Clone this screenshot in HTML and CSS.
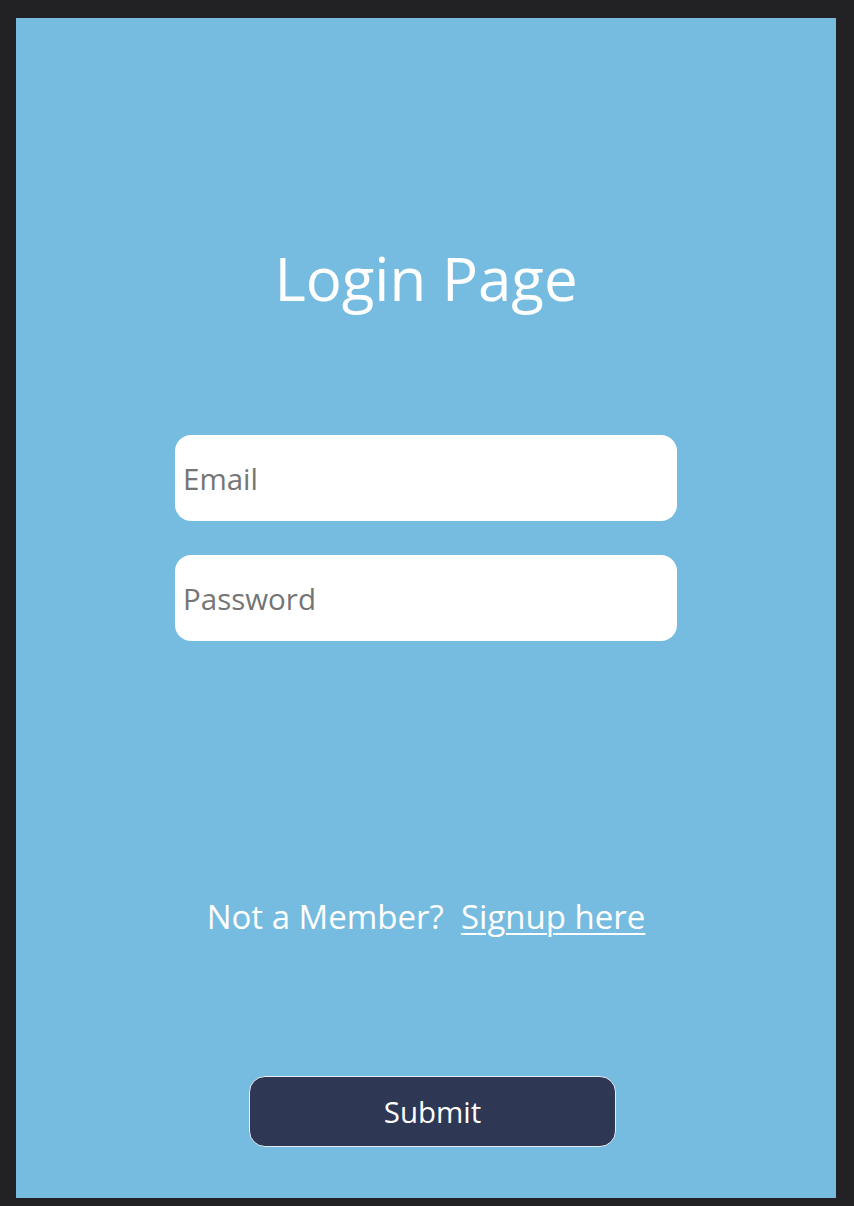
FILE: index.html
```html
<!DOCTYPE html>
<html lang="en">
<head>
<meta charset="utf-8">
<title>Login Page</title>
<link rel="stylesheet" href="styles.css">
</head>
<body>
<div class="frame">
  <main class="panel">
    <h1 class="title">Login Page</h1>
    <form class="form">
      <input class="field" type="email" placeholder="Email">
      <input class="field" type="password" placeholder="Password">
    </form>
    <p class="signup">Not a Member?&nbsp; <a href="#" class="signup-link">Signup here</a></p>
    <button class="submit" type="button">Submit</button>
  </main>
</div>
</body>
</html>
```

FILE: styles.css
```css
* { box-sizing: border-box; }

html, body {
  margin: 0;
  background: #222224;
}

.frame {
  padding: 18px 18px 8px 16px;
  height: 1206px;
}

.panel {
  background: #76bce0;
  height: 1180px;
  display: flex;
  flex-direction: column;
  align-items: center;
  font-family: "Open Sans", "Noto Sans", sans-serif;
  color: #ffffff;
  padding-top: 225px;
}

.title {
  margin: 0;
  font-weight: 400;
  font-size: 60px;
  line-height: 70px;
  height: 70px;
}

.form {
  margin-top: 122px;
  display: flex;
  flex-direction: column;
  gap: 34px;
}

.field {
  width: 502px;
  height: 86px;
  border: none;
  border-radius: 16px;
  background: #ffffff;
  padding: 0 8px;
  font-family: "Open Sans", "Noto Sans", sans-serif;
  font-size: 29.5px;
  color: #333;
  outline: none;
}

.field::placeholder {
  color: #757575;
}

.signup {
  margin: 256px 0 0 0;
  font-size: 33px;
  line-height: 40px;
}

.signup-link {
  color: #ffffff;
  text-decoration: underline;
  text-decoration-thickness: 2px;
  text-underline-offset: 4px;
}

.submit {
  margin-top: 139px;
  margin-left: 13px;
  width: 367px;
  height: 71px;
  border: 1px solid #e6eef5;
  border-radius: 16px;
  background: #2e3754;
  color: #ffffff;
  font-family: "Open Sans", "Noto Sans", sans-serif;
  font-size: 29.5px;
  cursor: pointer;
}
```
